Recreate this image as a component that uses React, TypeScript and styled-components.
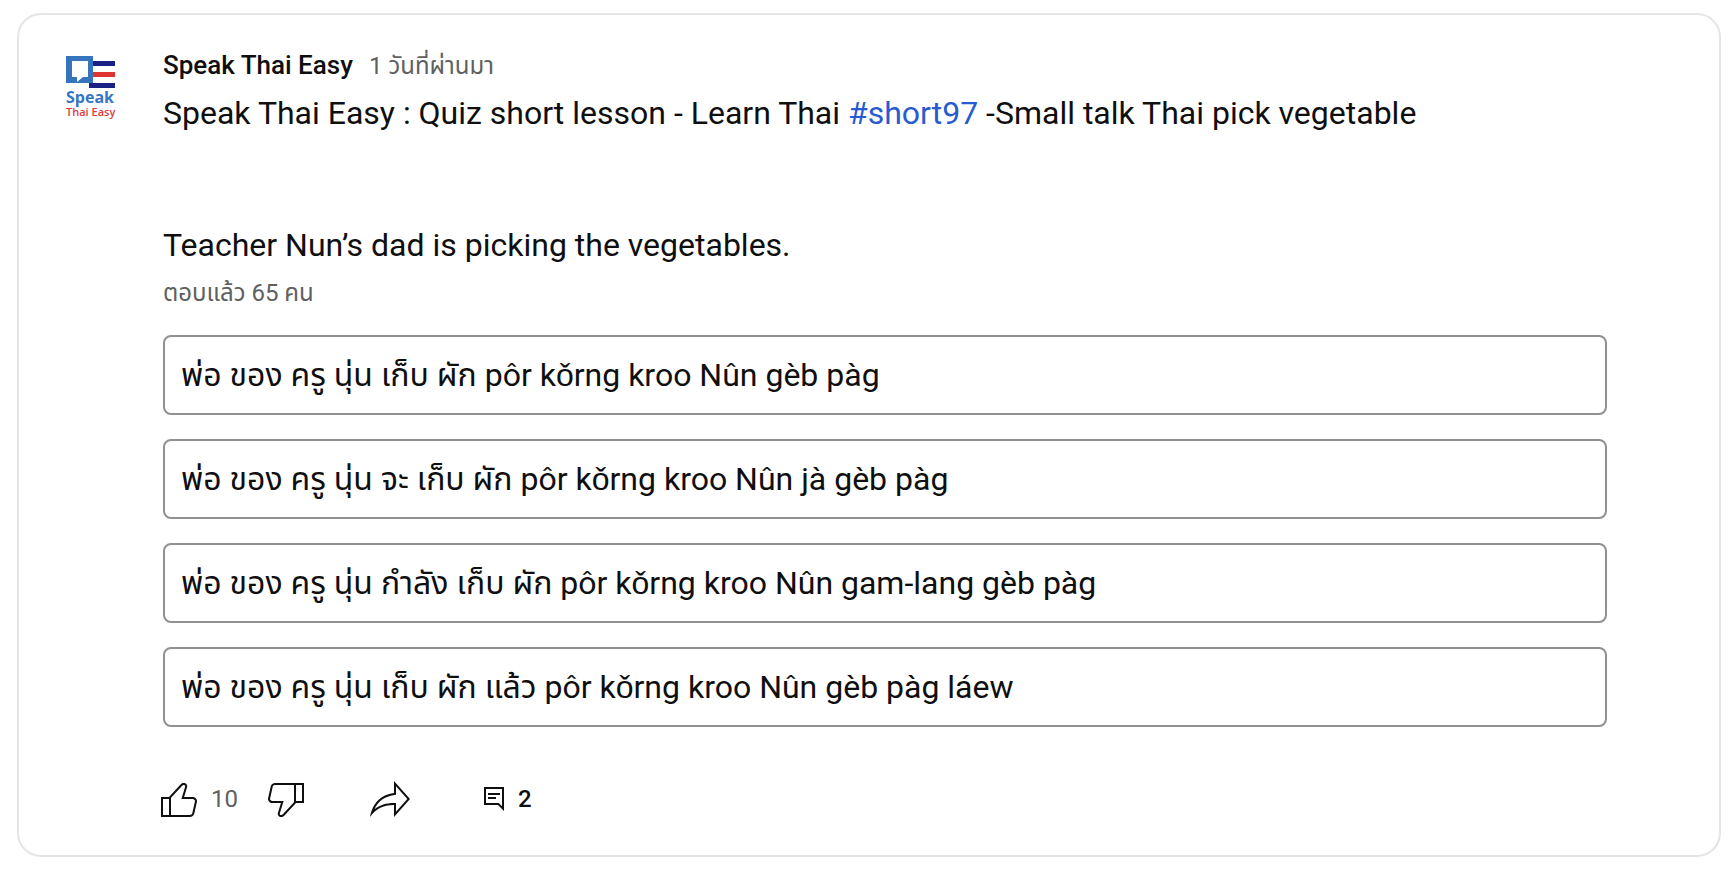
import React from "react";
import styled, { createGlobalStyle } from "styled-components";

const GlobalStyle = createGlobalStyle`
  * { box-sizing: border-box; }
  body {
    margin: 0;
    background: #fff;
    color: #0f0f0f;
    font-family: Roboto, "Noto Sans Thai", "Noto Sans", sans-serif;
  }
  button { font: inherit; color: inherit; background: none; cursor: pointer; }
`;

const Page = styled.main`
  padding: 13px 15px 17px 17px;
`;

const Card = styled.article`
  display: flex;
  gap: 32px;
  padding: 32px;
  border: 2px solid #e5e5e5;
  border-radius: 24px;
`;

const AvatarLink = styled.a`
  flex: none;
  width: 80px;
  height: 80px;
  svg { display: block; }
`;

const Content = styled.div`
  flex: 1;
  min-width: 0;
  padding-right: 80px;
`;

const Header = styled.header`
  display: flex;
  align-items: baseline;
  gap: 16px;
  height: 36px;
  margin-bottom: 8px;
  line-height: 36px;
`;

const Author = styled.a`
  font-size: 26px;
  font-weight: 500;
  color: inherit;
  text-decoration: none;
`;

const Muted = styled.span`
  font-size: 24px;
  color: #606060;
`;

const PostText = styled.p`
  margin: 0 0 8px;
  font-size: 32px;
  line-height: 44px;
  white-space: pre-line;
`;

const HashTag = styled.a`
  color: #285bd2;
  text-decoration: none;
`;

const Answered = styled.div`
  height: 36px;
  margin-bottom: 24px;
  line-height: 36px;
`;

const Options = styled.ul`
  display: grid;
  gap: 24px;
  margin: 0 0 48px;
  padding: 0;
  list-style: none;
`;

const Option = styled.button`
  display: block;
  width: 100%;
  height: 80px;
  padding: 0 16px;
  border: 2px solid #909090;
  border-radius: 8px;
  font-size: 32px;
  line-height: 44px;
  text-align: left;
`;

/* Roboto has no o with caron, so that letter takes its own family. */
const Caron = styled.span`
  font-family: "Liberation Sans", sans-serif;
`;

const Actions = styled.div`
  display: flex;
  align-items: center;
  margin-left: -8px;
`;

const Action = styled.button<{ $after?: number }>`
  display: flex;
  align-items: center;
  gap: 8px;
  height: 48px;
  margin-right: ${(p) => p.$after ?? 0}px;
  padding: 0;
  border: 0;
  svg { display: block; }
`;

const CommentCount = styled.span`
  font-size: 24px;
  font-weight: 500;
`;

const paths = {
  like: "M18.77,11h-4.23l1.52-4.94C16.38,5.03,15.54,4,14.38,4c-0.58,0-1.14,0.24-1.52,0.65L7,11H3v10h4h1h9.43c1.06,0,1.98-0.67,2.19-1.61l1.34-6C21.23,12.15,20.18,11,18.77,11z M7,20H4v-8h3V20z M19.98,13.17l-1.34,6C18.54,19.65,18.03,20,17.43,20H8v-8.61l5.6-6.06C13.79,5.12,14.08,5,14.38,5c0.26,0,0.5,0.11,0.63,0.3c0.07,0.1,0.15,0.26,0.09,0.47l-1.52,4.94L13.18,12h1.35h4.23c0.41,0,0.8,0.17,1.03,0.46C19.92,12.61,20.05,12.86,19.98,13.17z",
  dislike: "M17,4h-1H6.57C5.5,4,4.59,4.67,4.38,5.61l-1.34,6C2.77,12.85,3.82,14,5.23,14h4.23l-1.52,4.94C7.62,19.97,8.46,21,9.62,21c0.58,0,1.14-0.24,1.52-0.65L17,14h4V4H17z M10.4,19.67C10.21,19.88,9.92,20,9.62,20c-0.26,0-0.5-0.11-0.63-0.3c-0.07-0.1-0.15-0.26-0.09-0.47l1.52-4.94l0.4-1.29H9.46H5.23c-0.41,0-0.8-0.17-1.03-0.46c-0.12-0.15-0.25-0.4-0.18-0.72l1.34-6C5.46,5.35,5.97,5,6.57,5H16v8.61L10.4,19.67z M20,13h-3V5h3V13z",
  share: "M15,5.63L20.66,12L15,18.37V15v-1h-1c-3.96,0-7.14,1-9.75,3.09c1.84-4.07,5.11-6.4,9.89-7.1L15,9.86V9V5.63 M14,3v6C6.22,10.13,3.11,15.33,2,21c2.78-3.97,6.44-6,12-6v6l8-9L14,3L14,3z",
};

const Icon = ({ name }: { name: keyof typeof paths }) => (
  <svg width="48" height="48" viewBox="0 0 24 24" fill="#0f0f0f" aria-hidden="true">
    <path d={paths[name]} />
  </svg>
);

const CommentIcon = () => (
  <svg width="32" height="32" viewBox="0 0 32 32" aria-hidden="true">
    <path d="M6 4H26V28L20 22H6ZM8 6V20H20.8L24 23.2V6Z" fill="#0f0f0f" fillRule="evenodd" />
    <path d="M10 11H22M10 15H18" stroke="#0f0f0f" strokeWidth="2" />
  </svg>
);

const Logo = () => (
  <svg width="80" height="80" viewBox="0 0 80 80" role="img" aria-label="Speak Thai Easy">
    <path d="M15 9H42V36H15Z" fill="#3575bd" />
    <path d="M21 14H37V30H32L26 35V30H21Z" fill="#fff" />
    <path d="M42 14H64V19H42ZM38 36H64V41H38Z" fill="#1b2087" />
    <path d="M42 25H64V30H42Z" fill="#e0322f" />
    <text x="15" y="56" fontFamily="Open Sans" fontSize="16" fontWeight="700" fill="#3575c5">Speak</text>
    <text x="15" y="69" fontFamily="Open Sans" fontSize="11" fontWeight="600" fill="#e03a3c">Thai Easy</text>
  </svg>
);

const answers = [
  "พ่อ ของ ครู นุ่น เก็บ ผัก pôr kǒrng kroo Nûn gèb pàg",
  "พ่อ ของ ครู นุ่น จะ เก็บ ผัก pôr kǒrng kroo Nûn jà gèb pàg",
  "พ่อ ของ ครู นุ่น กำลัง เก็บ ผัก pôr kǒrng kroo Nûn gam-lang gèb pàg",
  "พ่อ ของ ครู นุ่น เก็บ ผัก แล้ว pôr kǒrng kroo Nûn gèb pàg láew",
];

const AnswerText = ({ text }: { text: string }) => {
  const [before, after] = text.normalize("NFC").split("\u01d2");
  return <>{before}<Caron>{"\u01d2"}</Caron>{after}</>;
};

export default function App() {
  return (
    <Page>
      <GlobalStyle />
      <Card>
        <AvatarLink href="#channel"><Logo /></AvatarLink>
        <Content>
          <Header>
            <Author href="#channel">Speak Thai Easy</Author>
            <Muted>1 วันที่ผ่านมา</Muted>
          </Header>
          <PostText>
            Speak Thai Easy : Quiz short lesson - Learn Thai <HashTag href="#short97">#short97</HashTag> -Small talk Thai pick vegetable
            {"\n\n\n"}
            Teacher Nun’s dad is picking the vegetables.
          </PostText>
          <Answered><Muted>ตอบแล้ว 65 คน</Muted></Answered>
          <Options>
            {answers.map((answer) => (
              <li key={answer}><Option type="button"><AnswerText text={answer} /></Option></li>
            ))}
          </Options>
          <Actions>
            <Action type="button" aria-label="Like" $after={24}>
              <Icon name="like" /><Muted>10</Muted>
            </Action>
            <Action type="button" aria-label="Dislike" $after={56}><Icon name="dislike" /></Action>
            <Action type="button" aria-label="Share" $after={64}><Icon name="share" /></Action>
            <Action type="button" aria-label="Comments">
              <CommentIcon /><CommentCount>2</CommentCount>
            </Action>
          </Actions>
        </Content>
      </Card>
    </Page>
  );
}
